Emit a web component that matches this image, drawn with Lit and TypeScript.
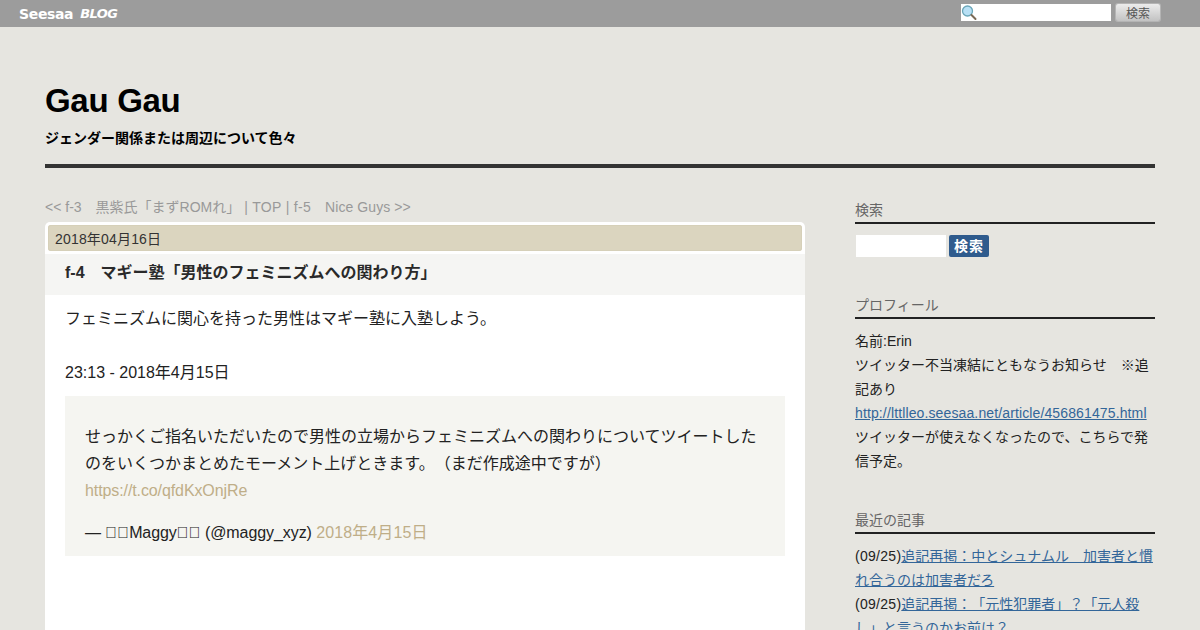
import { LitElement, html, css } from "lit";
import { customElement } from "lit/decorators.js";

const FF = css`"Liberation Sans", "Noto Sans CJK JP", sans-serif`;

@customElement("app-root")
export class AppRoot extends LitElement {
  static styles = css`
    :host { display: block; height: 630px; overflow: hidden; background: #e6e5e0; font-family: ${FF}; color: #222; text-spacing-trim: space-all; }
    a { color: inherit; text-decoration: none; }
    .bar { height: 27px; background: #9c9c9c; display: flex; align-items: center; padding: 0 40px 2px 19px; box-sizing: border-box; }
    .logo { color: #fff; font: bold 14px "DejaVu Sans", sans-serif; letter-spacing: -.35px; display: flex; gap: 7px; align-items: center; margin-top: 2px; }
    .logo i { font-size: 13px; letter-spacing: -.6px; }
    .spacer { flex: 1; }
    .q { width: 150px; height: 17px; background: #fff; position: relative; }
    .q svg { position: absolute; left: 0; top: 0; }
    .btn { width: 44px; height: 17px; margin-left: 5px; box-sizing: border-box; background: linear-gradient(#ececec, #c2c2c2); box-shadow: 0 0 0 1px #b4b4b4; border-radius: 2px; font-size: 12px; color: #555; display: flex; align-items: center; justify-content: center; }
    header { margin: 0 45px; height: 141px; box-sizing: border-box; padding-top: 55px; border-bottom: 4px solid #333; color: #000; }
    h1 { margin: 0; font-size: 33px; line-height: 38px; font-weight: bold; letter-spacing: -.3px; }
    .sub { margin: 10px 0 0; font-size: 14px; line-height: 16px; font-weight: bold; }
    .cols { display: flex; margin: 0 45px; justify-content: space-between; }
    main { width: 760px; padding-top: 29px; }
    .nav { font-size: 14px; line-height: 20px; color: #999; margin-bottom: 5px; }
    .nav span { letter-spacing: .3px; }
    .nav b { font-weight: normal; letter-spacing: .08px; }
    .card { background: #fff; border-radius: 5px 5px 0 0; padding-top: 3px; height: 500px; }
    .date { margin: 0 3px; height: 26px; background: #dbd5bf; border-radius: 3px; font-size: 14px; line-height: 28px; color: #333; padding-left: 7px; box-shadow: inset 0 0 0 1px #d6d0b9; overflow: hidden; letter-spacing: .18px; }
    h2 { margin: 3px 0 0; height: 41px; background: #f5f5f3; font-size: 16px; line-height: 37px; font-weight: bold; padding-left: 20px; color: #2a2a2a; box-sizing: border-box; }
    .body { padding: 0 20px; font-size: 16px; color: #222; }
    .l1 { margin: 0; padding-top: 12px; line-height: 24px; }
    .l2 { margin: 0; padding-top: 30px; line-height: 24px; }
    blockquote { margin: 11px 0 0; background: #f5f5f1; height: 160px; box-sizing: border-box; padding: 27px 20px 0; line-height: 27px; font-size: 16px; }
    blockquote p { margin: 0; }
    blockquote a { color: #bfae88; }
    .url { letter-spacing: -.1px; }
    .by { margin-top: 15px !important; letter-spacing: -.08px; }
    .by a { letter-spacing: .1px; }
    aside { width: 300px; padding-top: 33px; font-size: 14px; line-height: 24px; color: #222; }
    h3 { margin: 0; font-size: 14px; font-weight: normal; color: #666; line-height: 19px; border-bottom: 2px solid #222; height: 23px; box-sizing: border-box; }
    .sf { display: flex; margin: 11px 0 0 1px; gap: 3px; height: 22px; }
    .sf .i { width: 90px; height: 22px; background: #fff; }
    .sf .b { width: 40px; height: 22px; background: #2f5b8d; color: #fff; font-weight: bold; font-size: 14px; line-height: 22px; text-align: center; border-radius: 2px; letter-spacing: 1px; }
    .sec { margin-top: 39px; }
    .sec + .sec { margin-top: 38px; }
    .c { margin-top: 10px; }
    .c a { color: #336699; text-decoration: underline; }
    .c .u { letter-spacing: .125px; }
    .d { letter-spacing: .28px; }
  `;

  render() {
    return html`
      <div class="bar">
        <div class="logo"><span>Seesaa</span><i>BLOG</i></div>
        <div class="spacer"></div>
        <div class="q">
          <svg width="17" height="17" viewBox="0 0 17 17">
            <circle cx="6.5" cy="7" r="5" fill="#b8e0f5" stroke="#6aa6b8" stroke-width="1.3"/>
            <path d="M10.5 11l4 4" stroke="#7a6a55" stroke-width="2" stroke-linecap="round"/>
          </svg>
        </div>
        <div class="btn">検索</div>
      </div>
      <header>
        <h1>Gau Gau</h1>
        <p class="sub">ジェンダー関係または周辺について色々</p>
      </header>
      <div class="cols">
        <main>
          <div class="nav">&lt;&lt; f-3　黒紫氏「まずROMれ」 <span>| TOP | f-5</span>　<b>Nice Guys &gt;&gt;</b></div>
          <div class="card">
            <div class="date">2018年04月16日</div>
            <h2>f-4　マギー塾「男性のフェミニズムへの関わり方」</h2>
            <div class="body">
              <p class="l1">フェミニズムに関心を持った男性はマギー塾に入塾しよう。</p>
              <p class="l2">23:13 - 2018年4月15日</p>
              <blockquote>
                <p>せっかくご指名いただいたので男性の立場からフェミニズムへの関わりについてツイートしたのをいくつかまとめたモーメント上げときます。（まだ作成途中ですが）<br><a class="url" href="#">https://t.co/qfdKxOnjRe</a></p>
                <p class="by">— \u{E000}\u{E001}Maggy\u{E001}\u{E000} (@maggy_xyz) <a href="#">2018年4月15日</a></p>
              </blockquote>
            </div>
          </div>
        </main>
        <aside>
          <h3>検索</h3>
          <div class="sf"><div class="i"></div><div class="b">検索</div></div>
          <div class="sec">
            <h3>プロフィール</h3>
            <div class="c">名前:Erin<br>ツイッター不当凍結にともなうお知らせ　※追記あり<br><a class="u" href="#">http://lttlleo.seesaa.net/article/456861475.html</a><br>ツイッターが使えなくなったので、こちらで発信予定。</div>
          </div>
          <div class="sec">
            <h3>最近の記事</h3>
            <div class="c"><span class="d">(09/25)</span><a href="#">追記再掲：中とシュナムル　加害者と慣れ合うのは加害者だろ</a><br><span class="d">(09/25)</span><a href="#">追記再掲：「元性犯罪者」？「元人殺し」と言うのかお前は？</a></div>
          </div>
        </aside>
      </div>
    `;
  }
}
